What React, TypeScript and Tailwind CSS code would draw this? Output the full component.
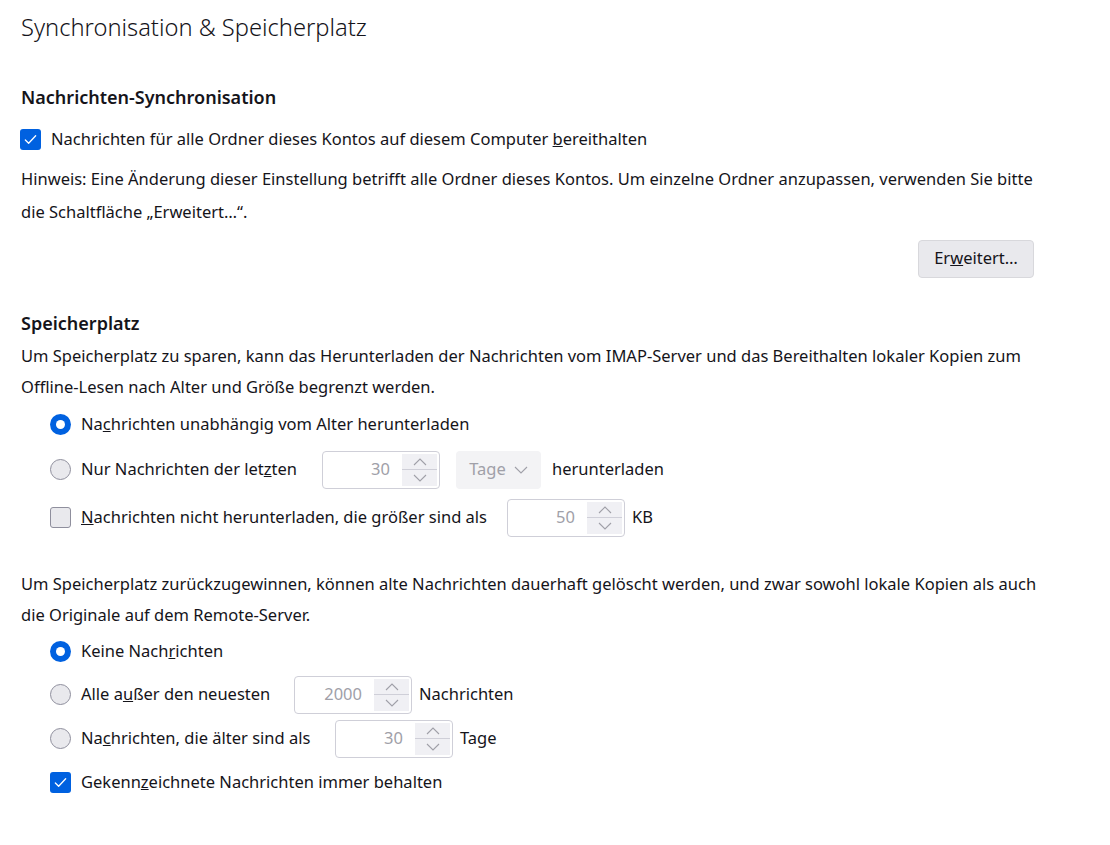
import type { ReactNode } from 'react';

function Check({ checked }: { checked: boolean }) {
  return checked ? (
    <span className="flex h-[21px] w-[21px] shrink-0 items-center justify-center rounded-[3px] bg-[#0061e0]">
      <svg width="15" height="15" viewBox="0 0 16 16" fill="none">
        <path d="M2.5 8.5l3.5 3.5 7.5-8" stroke="white" strokeWidth="1.4" strokeLinecap="round" strokeLinejoin="round" />
      </svg>
    </span>
  ) : (
    <span className="h-[21px] w-[21px] shrink-0 rounded-[3px] border border-[#8f8f9d] bg-[#e9e9ed]" />
  );
}

function Radio({ checked }: { checked: boolean }) {
  return checked ? (
    <span className="flex h-[21px] w-[21px] shrink-0 items-center justify-center rounded-full bg-[#0061e0]">
      <span className="h-[9px] w-[9px] rounded-full bg-white" />
    </span>
  ) : (
    <span className="h-[21px] w-[21px] shrink-0 rounded-full border border-[#8f8f9d] bg-[#e9e9ed]" />
  );
}

function Spinner({ value }: { value: string }) {
  return (
    <div className="flex h-[38px] w-[118px] items-stretch rounded-[4px] border border-[#cfcfd8] bg-white py-[2px] pr-[2px]">
      <div className="flex flex-1 items-center justify-end pr-[12px] text-[#a0a0a8]">{value}</div>
      <div className="flex w-[35px] flex-col bg-[#f0f0f4]">
        <div className="flex flex-1 items-center justify-center border-b border-[#cfcfd8]">
          <svg width="14" height="8" viewBox="0 0 14 8" fill="none">
            <path d="M1 7l6-6 6 6" stroke="#a0a0a8" strokeWidth="1.1" />
          </svg>
        </div>
        <div className="flex flex-1 items-center justify-center">
          <svg width="14" height="8" viewBox="0 0 14 8" fill="none">
            <path d="M1 1l6 6 6-6" stroke="#a0a0a8" strokeWidth="1.1" />
          </svg>
        </div>
      </div>
    </div>
  );
}

function Row({ children }: { children: ReactNode }) {
  return <div className="flex items-center gap-[10px]">{children}</div>;
}

export default function App() {
  return (
    <div className="min-h-[845px] w-[1110px] bg-white px-[21px] pt-[10px] text-[16.5px] text-[#15141a] font-['Noto_Sans',sans-serif]">
      {/* Title */}
      <h1 className="text-[23.7px] font-light leading-[34px]">Synchronisation &amp; Speicherplatz</h1>

      {/* Nachrichten-Synchronisation */}
      <h2 className="mt-[40px] text-[18px] font-semibold leading-[26px]">Nachrichten-Synchronisation</h2>
      <div className="mt-[17px] -ml-px">
        <Row>
          <Check checked />
          <span>
            Nachrichten für alle Ordner dieses Kontos auf diesem Computer <u>b</u>ereithalten
          </span>
        </Row>
      </div>
      <p className="mt-[10px] leading-[33px]">
        Hinweis: Eine Änderung dieser Einstellung betrifft alle Ordner dieses Kontos. Um einzelne Ordner anzupassen, verwenden Sie bitte
        <br />
        die Schaltfläche „Erweitert…“.
      </p>
      <div className="mt-[12px] flex justify-end pr-[55px]">
        <button className="h-[38px] w-[116px] rounded-[4px] border border-[#d8d8dc] bg-[#e9e9ed]">
          Er<u>w</u>eitert…
        </button>
      </div>

      {/* Speicherplatz */}
      <h2 className="mt-[32px] text-[18px] font-semibold leading-[26px]">Speicherplatz</h2>
      <p className="mt-[4px] leading-[31px]">
        Um Speicherplatz zu sparen, kann das Herunterladen der Nachrichten vom IMAP-Server und das Bereithalten lokaler Kopien zum
        <br />
        Offline-Lesen nach Alter und Größe begrenzt werden.
      </p>
      <div className="mt-[4px] flex flex-col pl-[29px]">
        <div className="flex h-[38px] items-center">
          <Row>
            <Radio checked />
            <span>
              Na<u>c</u>hrichten unabhängig vom Alter herunterladen
            </span>
          </Row>
        </div>
        <div className="mt-[7px] flex h-[38px] items-center">
          <Row>
            <Radio checked={false} />
            <span className="w-[241px]">
              Nur Nachrichten der let<u>z</u>ten
            </span>
          </Row>
          <Spinner value="30" />
          <div className="ml-[16px] flex h-[38px] w-[85px] items-center justify-center gap-[8px] rounded-[4px] bg-[#f3f3f5] text-[#a0a0a8]">
            Tage
            <svg width="14" height="8" viewBox="0 0 14 8" fill="none">
              <path d="M1 1l6 6 6-6" stroke="#a0a0a8" strokeWidth="1.1" />
            </svg>
          </div>
          <span className="ml-[11px]">herunterladen</span>
        </div>
        <div className="mt-[10px] flex h-[38px] items-center">
          <Row>
            <Check checked={false} />
            <span className="w-[426px]">
              <u>N</u>achrichten nicht herunterladen, die größer sind als
            </span>
          </Row>
          <Spinner value="50" />
          <span className="ml-[7px]">KB</span>
        </div>
      </div>

      <p className="mt-[31px] leading-[31px]">
        Um Speicherplatz zurückzugewinnen, können alte Nachrichten dauerhaft gelöscht werden, und zwar sowohl lokale Kopien als auch
        <br />
        die Originale auf dem Remote-Server.
      </p>
      <div className="mt-[3px] flex flex-col pl-[29px]">
        <div className="flex h-[38px] items-center">
          <Row>
            <Radio checked />
            <span>
              Keine Nach<u>r</u>ichten
            </span>
          </Row>
        </div>
        <div className="mt-[5px] flex h-[38px] items-center">
          <Row>
            <Radio checked={false} />
            <span className="w-[213px]">
              Alle a<u>u</u>ßer den neuesten
            </span>
          </Row>
          <Spinner value="2000" />
          <span className="ml-[7px]">Nachrichten</span>
        </div>
        <div className="mt-[6px] flex h-[38px] items-center">
          <Row>
            <Radio checked={false} />
            <span className="w-[254px]">
              Na<u>c</u>hrichten, die älter sind als
            </span>
          </Row>
          <Spinner value="30" />
          <span className="ml-[7px]">Tage</span>
        </div>
        <div className="mt-[6px] flex h-[38px] items-center">
          <Row>
            <Check checked />
            <span>
              Gekenn<u>z</u>eichnete Nachrichten immer behalten
            </span>
          </Row>
        </div>
      </div>
    </div>
  );
}
